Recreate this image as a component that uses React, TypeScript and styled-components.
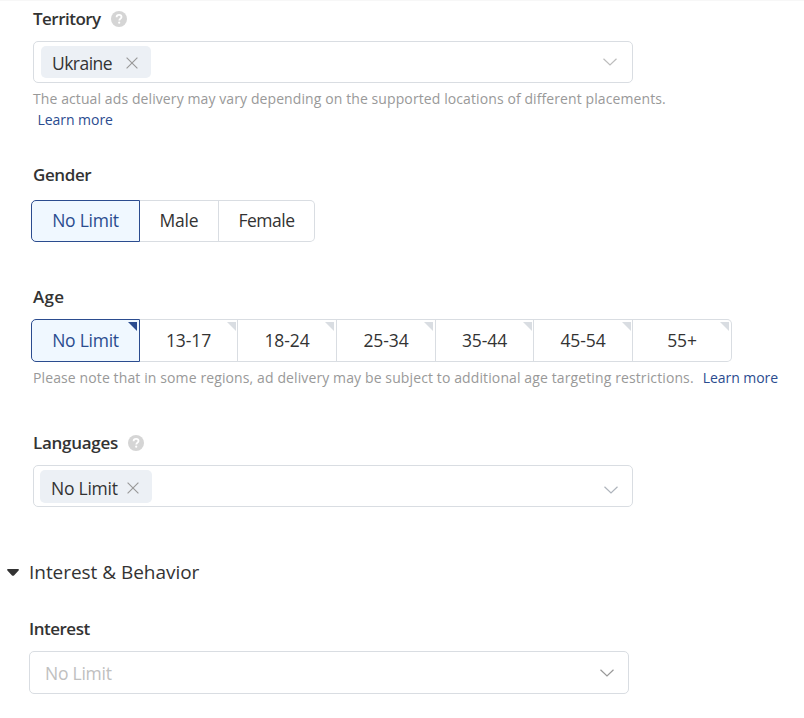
import React from 'react';
import styled, { createGlobalStyle, css } from 'styled-components';

const colors = {
  text: '#333333',
  muted: '#999999',
  link: '#2b4c8f',
  border: '#d9dde2',
  tag: '#ecf0f5',
  activeBg: '#f0f8ff',
  help: '#d5d5d5',
  placeholder: '#c0c0c0',
};

const GlobalStyle = createGlobalStyle`
  *, *::before, *::after { box-sizing: border-box; }
  body {
    margin: 0;
    background: #ffffff;
    color: ${colors.text};
    font-family: "Open Sans", "Noto Sans", sans-serif;
  }
`;

const Page = styled.main`
  width: 804px;
  height: 718px;
  overflow: hidden;
  padding-top: 7px;
  border-top: 1px solid #f7f7f7;
`;

const Field = styled.section<{ $left: number; $gap?: number }>`
  padding-left: ${(p) => p.$left}px;
  margin-bottom: ${(p) => p.$gap ?? 0}px;
`;

const Text = styled.span<{ $ls?: number }>`
  letter-spacing: ${(p) => p.$ls ?? 0}px;
  white-space: nowrap;
`;

const Label = styled.div<{ $gap: number }>`
  display: flex;
  align-items: center;
  gap: 10px;
  height: 22px;
  margin-bottom: ${(p) => p.$gap}px;
  font-size: 17px;
  font-weight: 600;
  line-height: 22px;
`;

const SelectBox = styled.div<{ $height: number; $padLeft: number; $padRight: number }>`
  display: flex;
  align-items: center;
  justify-content: space-between;
  width: 600px;
  height: ${(p) => p.$height}px;
  padding: 0 ${(p) => p.$padRight}px 0 ${(p) => p.$padLeft}px;
  border: 1px solid ${colors.border};
  border-radius: 5px;
`;

const Tag = styled.div<{ $width: number; $height: number; $drop?: number }>`
  display: flex;
  align-items: center;
  justify-content: space-between;
  width: ${(p) => p.$width}px;
  height: ${(p) => p.$height}px;
  padding: ${(p) => p.$drop ?? 2}px 13px 0 11px;
  border-radius: 5px;
  background: ${colors.tag};
  font-size: 17.5px;
  line-height: 30px;
`;

const Placeholder = styled.div`
  padding-top: 1px;
  color: ${colors.placeholder};
  font-size: 17.5px;
  line-height: 24px;
`;

const Hint = styled.p`
  margin: 0;
  padding-top: 5px;
  color: ${colors.muted};
  font-size: 14px;
  line-height: 21px;
  white-space: nowrap;
`;

const Link = styled.a<{ $indent: number }>`
  margin-left: ${(p) => p.$indent}px;
  color: ${colors.link};
  letter-spacing: -0.05px;
  text-decoration: none;
`;

const Segments = styled.div<{ $height: number }>`
  display: flex;
  width: max-content;
  height: ${(p) => p.$height}px;
  margin-left: -2px;
`;

const Segment = styled.button<{ $width: number; $active?: boolean }>`
  position: relative;
  width: ${(p) => p.$width}px;
  padding: 0 0 2px;
  border: 1px solid ${colors.border};
  border-left: 0;
  background: #ffffff;
  color: ${colors.text};
  font: 400 17.5px/24px "Open Sans", "Noto Sans", sans-serif;
  &:last-child { border-radius: 0 5px 5px 0; }
  ${(p) =>
    p.$active &&
    css`
      border: 1px solid ${colors.link};
      border-radius: 5px 0 0 5px;
      background: ${colors.activeBg};
      color: ${colors.link};
    `}
`;

const Corner = styled.i<{ $active?: boolean; $right?: number }>`
  position: absolute;
  top: 2px;
  right: ${(p) => p.$right ?? 2}px;
  width: 9px;
  height: 9px;
  background: ${(p) => (p.$active ? colors.link : colors.border)};
  clip-path: polygon(0 0, 100% 0, 100% 100%);
`;

const SectionTitle = styled.h2`
  display: flex;
  align-items: center;
  gap: 10px;
  height: 26px;
  margin: 0 0 33px;
  padding-left: 7px;
  font-size: 19px;
  font-weight: 400;
  line-height: 26px;
`;

const Icon = styled.svg<{ $drop?: number }>`
  display: block;
  flex: none;
  margin-top: ${(p) => p.$drop ?? 0}px;
`;

const HelpIcon = () => (
  <Icon width="16" height="16" viewBox="0 0 16 16" fill="none" $drop={-1}>
    <circle cx="8" cy="8" r="8" fill={colors.help} />
    <path d="M5.6 6.2c0-1.5 1-2.3 2.5-2.3s2.4.8 2.4 2c0 1.6-2.2 1.8-2.2 3.6" stroke="#fff" strokeWidth="1.8" />
    <circle cx="8.2" cy="11.7" r="1.1" fill="#fff" />
  </Icon>
);

const CloseIcon = () => (
  <Icon width="12" height="12" viewBox="0 0 12 12" fill="none" $drop={-1}>
    <path d="M.6.6l10.8 10.8M11.4.6L.6 11.4" stroke="#999" strokeWidth="1.15" />
  </Icon>
);

const Chevron = ({ tone, drop = 0 }: { tone: string; drop?: number }) => (
  <Icon width="14" height="8" viewBox="0 0 14 8" fill="none" $drop={drop}>
    <path d="M.5.7L7 7 13.5.7" stroke={tone} strokeWidth="1.2" />
  </Icon>
);

const ages: { label: string; width: number; corner: number }[] = [
  { label: '13-17', width: 98, corner: 1 },
  { label: '18-24', width: 99, corner: 2 },
  { label: '25-34', width: 99, corner: 2 },
  { label: '35-44', width: 98, corner: 1 },
  { label: '45-54', width: 99, corner: 1 },
  { label: '55+', width: 99, corner: 2 },
];

export default function App() {
  return (
    <>
      <GlobalStyle />
      <Page>
        <Field $left={33} $gap={34}>
          <Label $gap={11}>
            <Text $ls={-0.52}>Territory</Text>
            <HelpIcon />
          </Label>
          <SelectBox $height={42} $padLeft={7} $padRight={15}>
            <Tag $width={110} $height={32}>
              <Text $ls={-0.55}>Ukraine</Text>
              <CloseIcon />
            </Tag>
            <Chevron tone="#bdbdbd" />
          </SelectBox>
          <Hint>
            <Text $ls={0.096}>
              The actual ads delivery may vary depending on the supported locations of different placements.
            </Text>
            <br />
            <Link $indent={4.5}>Learn more</Link>
          </Hint>
        </Field>

        <Field $left={33} $gap={44}>
          <Label $gap={14}>
            <Text $ls={-0.4}>Gender</Text>
          </Label>
          <Segments $height={42}>
            <Segment $width={109} $active>
              <Text $ls={-0.25}>No Limit</Text>
            </Segment>
            <Segment $width={79}>
              <Text $ls={-0.2}>Male</Text>
            </Segment>
            <Segment $width={96}>
              <Text $ls={-0.5}>Female</Text>
            </Segment>
          </Segments>
        </Field>

        <Field $left={33} $gap={44}>
          <Label $gap={11}>
            <Text $ls={0.3}>Age</Text>
          </Label>
          <Segments $height={43}>
            <Segment $width={109} $active>
              <Text $ls={-0.25}>No Limit</Text>
              <Corner $active />
            </Segment>
            {ages.map((age) => (
              <Segment key={age.label} $width={age.width}>
                <Text $ls={-0.1}>{age.label}</Text>
                <Corner $right={age.corner} />
              </Segment>
            ))}
          </Segments>
          <Hint>
            <Text $ls={0.113}>
              Please note that in some regions, ad delivery may be subject to additional age targeting restrictions.
            </Text>
            <Link $indent={9}>Learn more</Link>
          </Hint>
        </Field>

        <Field $left={33} $gap={52}>
          <Label $gap={11}>
            <Text $ls={-0.27}>Languages</Text>
            <HelpIcon />
          </Label>
          <SelectBox $height={42} $padLeft={6} $padRight={14}>
            <Tag $width={112} $height={33} $drop={4}>
              <Text $ls={-0.25}>No Limit</Text>
              <CloseIcon />
            </Tag>
            <Chevron tone="#aeb4bc" drop={7} />
          </SelectBox>
        </Field>

        <SectionTitle>
          <Icon width="12" height="7" viewBox="0 0 12 7" fill={colors.text}>
            <path d="M1 0h10c1 0 1.2.8.6 1.4L7 6.4c-.6.6-1.4.6-2 0L.4 1.4C-.2.8 0 0 1 0z" />
          </Icon>
          <Text $ls={-0.04}>Interest &amp; Behavior</Text>
        </SectionTitle>

        <Field $left={29}>
          <Label $gap={11}>
            <Text $ls={-0.5}>Interest</Text>
          </Label>
          <SelectBox $height={43} $padLeft={15} $padRight={14}>
            <Placeholder>
              <Text $ls={-0.25}>No Limit</Text>
            </Placeholder>
            <Chevron tone="#999999" />
          </SelectBox>
        </Field>
      </Page>
    </>
  );
}
